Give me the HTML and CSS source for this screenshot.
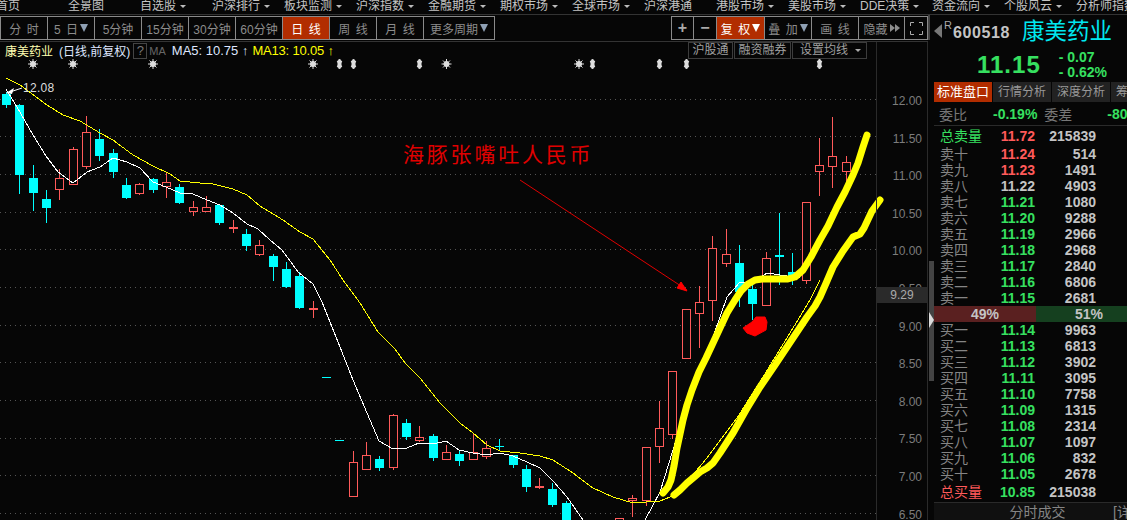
FILE: index.html
```html
<!DOCTYPE html>
<html lang="zh-CN">
<head>
    <meta charset="UTF-8">
    <meta name="viewport" content="width=device-width, initial-scale=1.0">
    <title>康美药业 600518</title>
    <link rel="stylesheet" href="styles.css">
</head>
<body>
    <nav class="menu">
        <span class="menu-item">首页</span>
        <span class="menu-item">全景图</span>
        <span class="menu-item caret">自选股</span>
        <span class="menu-item caret">沪深排行</span>
        <span class="menu-item caret">板块监测</span>
        <span class="menu-item caret">沪深指数</span>
        <span class="menu-item caret">金融期货</span>
        <span class="menu-item caret">期权市场</span>
        <span class="menu-item caret">全球市场</span>
        <span class="menu-item">沪深港通</span>
        <span class="menu-item caret">港股市场</span>
        <span class="menu-item caret">美股市场</span>
        <span class="menu-item caret">DDE决策</span>
        <span class="menu-item caret">资金流向</span>
        <span class="menu-item caret">个股风云</span>
        <span class="menu-item">分析师指数</span>
    </nav>

    <div class="main">
        <section class="left">
            <div class="toolbar">
                <div class="btn-group">
                    <span class="tb-btn">分 时</span>
                    <span class="tb-btn">5 日<i class="tri"></i></span>
                    <span class="tb-btn">5分钟</span>
                    <span class="tb-btn">15分钟</span>
                    <span class="tb-btn">30分钟</span>
                    <span class="tb-btn">60分钟</span>
                    <span class="tb-btn active">日 线</span>
                    <span class="tb-btn">周 线</span>
                    <span class="tb-btn">月 线</span>
                    <span class="tb-btn w-more">更多周期<i class="tri"></i></span>
                </div>
                <div class="btn-group">
                    <span class="tb-btn w-xs sign">+</span>
                    <span class="tb-btn w-s sign">−</span>
                    <span class="tb-btn w-m active">复 权<i class="tri white"></i></span>
                    <span class="tb-btn">叠 加<i class="tri"></i></span>
                    <span class="tb-btn">画 线</span>
                    <span class="tb-btn w-hide">隐藏<i class="arr"></i><i class="arr"></i></span>
                    <span class="tb-btn w-s">
                        <svg class="fs-icon" viewBox="0 0 13 13"><path d="M0.5 4V0.5H4M9 0.5H12.5V4M12.5 9V12.5H9M4 12.5H0.5V9"/></svg>
                    </span>
                </div>
            </div>

            <div class="chart-area">
                <div class="plot">
                    <div class="legend">
                        <span class="stock">康美药业</span>
                        <span class="period">(日线,前复权)</span>
                        <span class="help">?</span>
                        <span class="ma-name">MA</span>
                        <span class="ma5">MA5: 10.75 ↑</span>
                        <span class="ma13">MA13: 10.05 ↑</span>
                        <div class="legend-btns">
                            <span class="lg-btn">沪股通</span>
                            <span class="lg-btn">融资融券</span>
                            <span class="lg-btn wide">设置均线<i class="tri small"></i></span>
                        </div>
                    </div>

                    <svg class="kline" viewBox="0 60 876 460" width="876" height="460">
                        <defs>
                            <g id="star">
                                <circle r="2.6"/>
                                <path d="M0 -5V5M-5 0H5M-3.5 -3.5L3.5 3.5M-3.5 3.5L3.5 -3.5"/>
                            </g>
                            <polygon id="updown" points="0,-5 2.5,-2 1.5,-2 1.5,2 2.5,2 0,5 -2.5,2 -1.5,2 -1.5,-2 -2.5,-2"/>
                        </defs>

                        <g class="marks">
                            <use href="#star" x="33" y="64"/>
                            <use href="#star" x="73" y="64"/>
                            <use href="#star" x="153" y="64"/>
                            <use href="#star" x="313" y="64"/>
                            <use href="#updown" x="339.5" y="64"/>
                            <use href="#updown" x="353.5" y="64"/>
                            <use href="#updown" x="419.5" y="64"/>
                            <use href="#star" x="446.5" y="64"/>
                            <use href="#star" x="579" y="64"/>
                            <use href="#updown" x="592.5" y="64"/>
                            <use href="#updown" x="659.5" y="64"/>
                            <use href="#updown" x="686.5" y="64"/>
                            <use href="#updown" x="819.5" y="64"/>
                        </g>

                        <path class="grid" d="M0 99.5H876M0 136.5H876M0 174.5H876M0 212.5H876M0 249.5H876M0 287.5H876M0 325.5H876M0 362.5H876M0 400.5H876M0 438.5H876M0 475.5H876M0 513.5H876"/>

                        <!-- 阴线 -->
                        <g class="down">
                            <path d="M6.5 92V108"/><rect x="2.5" y="94.5" width="8" height="10"/>
                            <path d="M19.5 104V194"/><rect x="15.5" y="105.5" width="8" height="69"/>
                            <path d="M33.5 165V211"/><rect x="29.5" y="178.5" width="8" height="14"/>
                            <path d="M46.5 190V223"/><rect x="42.5" y="199.5" width="8" height="8"/>
                            <path d="M99.5 129V161"/><rect x="95.5" y="139.5" width="8" height="16"/>
                            <path d="M113.5 149V178"/><rect x="109.5" y="153.5" width="8" height="18"/>
                            <path d="M126.5 178V199"/><rect x="122.5" y="185.5" width="8" height="12"/>
                            <path d="M153.5 178V193"/><rect x="149.5" y="179.5" width="8" height="10"/>
                            <path d="M179.5 184V204"/><rect x="175.5" y="187.5" width="8" height="15"/>
                            <path d="M219.5 205V225"/><rect x="215.5" y="205.5" width="8" height="17"/>
                            <path d="M246.5 229V251"/><rect x="242.5" y="234.5" width="8" height="11"/>
                            <path d="M273.5 254V281"/><rect x="269.5" y="256.5" width="8" height="10"/>
                            <path d="M286.5 262V288"/><rect x="282.5" y="269.5" width="8" height="17"/>
                            <path d="M299.5 272V309"/><rect x="295.5" y="276.5" width="8" height="31"/>
                            <path d="M322 377.5H331M335 440.5H344"/>
                            <path d="M379.5 456V471"/><rect x="375.5" y="459.5" width="8" height="8"/>
                            <path d="M406.5 419V440"/><rect x="402.5" y="423.5" width="8" height="13"/>
                            <path d="M433.5 434V461"/><rect x="429.5" y="436.5" width="8" height="21"/>
                            <path d="M459.5 450V466"/><rect x="455.5" y="454.5" width="8" height="6"/>
                            <path d="M499.5 439V450M495 446.5H504"/>
                            <path d="M513.5 455V468"/><rect x="509.5" y="455.5" width="8" height="9"/>
                            <path d="M526.5 465V492"/><rect x="522.5" y="469.5" width="8" height="17"/>
                            <path d="M552.5 483V507"/><rect x="548.5" y="489.5" width="8" height="15"/>
                            <path d="M566.5 501V525"/><rect x="562.5" y="503.5" width="8" height="22"/>
                            <path d="M739.5 245V307"/><rect x="735.5" y="263.5" width="8" height="28"/>
                            <path d="M752.5 285V320"/><rect x="748.5" y="289.5" width="8" height="14"/>
                            <path d="M779.5 213V285M775 255.5H784M775 256.5H784"/>
                            <path d="M792.5 253V285"/><rect x="788.5" y="272.5" width="8" height="6"/>
                        </g>

                        <!-- 阳线 -->
                        <g class="up">
                            <path d="M59.5 169V200"/><rect x="55.5" y="178.5" width="8" height="11"/>
                            <path d="M73.5 147V185"/><rect x="69.5" y="149.5" width="8" height="35"/>
                            <path d="M86.5 116V169"/><rect x="82.5" y="132.5" width="8" height="34"/>
                            <path d="M139.5 183V195"/><rect x="135.5" y="184.5" width="8" height="9"/>
                            <path d="M166.5 173V198"/><rect x="162.5" y="182.5" width="8" height="4"/>
                            <path d="M193.5 201V216"/><rect x="189.5" y="207.5" width="8" height="4"/>
                            <path d="M206.5 196V212"/><rect x="202.5" y="207.5" width="8" height="4"/>
                            <path d="M233.5 220V233M229 227.5H238M229 228.5H238"/>
                            <path d="M259.5 240V256"/><rect x="255.5" y="245.5" width="8" height="9"/>
                            <path d="M313.5 301V318M309 308.5H318M309 309.5H318"/>
                            <path d="M353.5 451V462"/><rect x="349.5" y="462.5" width="8" height="34"/>
                            <path d="M366.5 442V470"/><rect x="362.5" y="455.5" width="8" height="14"/>
                            <path d="M393.5 414V470"/><rect x="389.5" y="415.5" width="8" height="52"/>
                            <path d="M419.5 426V442"/><rect x="415.5" y="437.5" width="8" height="3"/>
                            <path d="M446.5 445V460"/><rect x="442.5" y="452.5" width="8" height="7"/>
                            <path d="M473.5 433V460"/><rect x="469.5" y="452.5" width="8" height="7"/>
                            <path d="M486.5 441V459"/><rect x="482.5" y="448.5" width="8" height="8"/>
                            <path d="M539.5 478V489M535 486.5H544M535 487.5H544"/>
                            <rect x="615.5" y="518.5" width="8" height="8"/>
                            <path d="M632.5 495V517"/><rect x="628.5" y="498.5" width="8" height="2"/>
                            <path d="M646.5 447V506"/><rect x="642.5" y="447.5" width="8" height="53"/>
                            <path d="M659.5 401V463"/><rect x="655.5" y="428.5" width="8" height="18"/>
                            <path d="M672.5 371V439"/><rect x="668.5" y="371.5" width="8" height="63"/>
                            <rect x="682.5" y="309.5" width="8" height="49"/>
                            <path d="M699.5 286V348"/><rect x="695.5" y="302.5" width="8" height="11"/>
                            <path d="M712.5 236V321"/><rect x="708.5" y="248.5" width="8" height="52"/>
                            <path d="M726.5 229V267"/><rect x="722.5" y="254.5" width="8" height="9"/>
                            <path d="M766.5 252V306"/><rect x="762.5" y="258.5" width="8" height="47"/>
                            <path d="M806.5 202V284"/><rect x="802.5" y="202.5" width="8" height="78"/>
                            <path d="M819.5 138V196"/><rect x="815.5" y="165.5" width="8" height="6"/>
                            <path d="M832.5 117V188"/><rect x="828.5" y="156.5" width="8" height="10"/>
                            <path d="M846.5 156V183"/><rect x="842.5" y="162.5" width="8" height="9"/>
                        </g>

                        <polyline class="ma-line white-line" points="6,89 17,107 33,135 46,156 58,172 73,183 87,172 100,167 113,158 127,162 140,168 153,182 166,187 180,193 193,194 207,200 220,205 233,213 247,224 258,229 270,240 282,250 288,258 298,272 313,284 322,302 328,317 340,347 353,380 367,413 379,441 393,449 407,448 419,443 433,444 446,441 459,450 473,453 487,455 500,453 513,456 527,462 540,468 553,481 567,497 583,520"/>
                        <polyline class="ma-line white-line" points="645,520 660,492 673,450 690,395 713,337 727,297 740,282 753,282 767,273 780,275 800,278"/>
                        <polyline class="ma-line yellow-line" points="6,78 20,85 47,105 63,115 80,121 100,133 113,140 133,155 153,166 170,174 180,181 200,183 213,184 233,189 247,195 260,206 283,220 300,232 313,239 330,260 343,280 360,303 378,332 395,349 405,363 420,378 440,403 460,423 473,433 487,445 500,451 520,453 540,456 553,460 573,473 593,488 613,497 633,503 660,501 675,495 703,463 737,418 763,377 793,328 810,300 820,280"/>

                        <!-- 手绘 -->
                        <polyline class="hand" points="663,493 668,487 671,480 674,466 677,448 680,434 683,420 687,405 692,390 699,372 706,358 713,343 720,328 727,313 735,300 741,291 748,284 755,280 762,279 775,279 788,279 795,277 803,270 811,257 820,240 828,226 837,207 845,192 853,175 858,163 863,147 867,135"/>
                        <polyline class="hand" points="674,495 680,490 687,483 693,478 700,472 707,468 713,463 720,453 733,433 746,410 760,387 775,365 793,338 807,317 815,306 820,297 827,281 833,267 843,251 853,237 860,234 864,228 872,211 880,200"/>
                        <polygon class="blob" points="743,328 752,322 756,317 765,317 767,322 766,330 755,336 747,333"/>
                        <path class="red-arrow" d="M520 180L687 290"/>
                        <polygon class="blob" points="687,291 677,288 681,282"/>

                        <path class="peak-arrow" d="M7 93L22 88"/>
                        <polygon class="peak-head" points="6,93 14,88 12,94"/>
                        <text class="peak-label" x="23" y="92">12.08</text>
                        <text class="note" x="403" y="162">海豚张嘴吐人民币</text>
                    </svg>
                </div>

                <div class="axis">
                    <span>12.00</span>
                    <span>11.50</span>
                    <span>11.00</span>
                    <span>10.50</span>
                    <span>10.00</span>
                    <span>9.50</span>
                    <span>9.00</span>
                    <span>8.50</span>
                    <span>8.00</span>
                    <span>7.50</span>
                    <span>7.00</span>
                    <span>6.50</span>
                    <div class="cursor-price">9.29</div>
                </div>
            </div>
        </section>

        <div class="strip">
            <div class="strip-top"></div>
            <div class="thumb"></div>
            <i class="pointer"></i>
        </div>

        <aside class="panel">
            <div class="code-row">
                <i class="back"></i>
                <sup class="r-mark">R</sup>
                <span class="code">600518</span>
                <span class="name">康美药业</span>
            </div>
            <div class="price-row">
                <span class="price">11.15</span>
                <div class="change">
                    <span>- 0.07</span>
                    <span>- 0.62%</span>
                </div>
            </div>
            <div class="tabs">
                <span class="tab on">标准盘口</span>
                <span class="tab">行情分析</span>
                <span class="tab">深度分析</span>
                <span class="tab">筹码分布</span>
            </div>
            <div class="wei">
                <span class="w-label">委比</span>
                <span class="w-val">-0.19%</span>
                <span class="w-label w-diff">委差</span>
                <span class="w-val w-end">-80</span>
            </div>

            <div class="row total"><span class="green">总卖量</span><b class="red">11.72</b><b>215839</b></div>
            <div class="row"><span>卖十</span><b class="red">11.24</b><b>514</b></div>
            <div class="row"><span>卖九</span><b class="red">11.23</b><b>1491</b></div>
            <div class="row"><span>卖八</span><b class="gray">11.22</b><b>4903</b></div>
            <div class="row"><span>卖七</span><b class="green">11.21</b><b>1080</b></div>
            <div class="row"><span>卖六</span><b class="green">11.20</b><b>9288</b></div>
            <div class="row"><span>卖五</span><b class="green">11.19</b><b>2966</b></div>
            <div class="row"><span>卖四</span><b class="green">11.18</b><b>2968</b></div>
            <div class="row"><span>卖三</span><b class="green">11.17</b><b>2840</b></div>
            <div class="row"><span>卖二</span><b class="green">11.16</b><b>6806</b></div>
            <div class="row"><span>卖一</span><b class="green">11.15</b><b>2681</b></div>

            <div class="ratio">
                <span class="ratio-buy">49%</span>
                <span class="ratio-sell">51%</span>
            </div>

            <div class="row"><span>买一</span><b class="green">11.14</b><b>9963</b></div>
            <div class="row"><span>买二</span><b class="green">11.13</b><b>6813</b></div>
            <div class="row"><span>买三</span><b class="green">11.12</b><b>3902</b></div>
            <div class="row"><span>买四</span><b class="green">11.11</b><b>3095</b></div>
            <div class="row"><span>买五</span><b class="green">11.10</b><b>7758</b></div>
            <div class="row"><span>买六</span><b class="green">11.09</b><b>1315</b></div>
            <div class="row"><span>买七</span><b class="green">11.08</b><b>2314</b></div>
            <div class="row"><span>买八</span><b class="green">11.07</b><b>1097</b></div>
            <div class="row"><span>买九</span><b class="green">11.06</b><b>832</b></div>
            <div class="row"><span>买十</span><b class="green">11.05</b><b>2678</b></div>
            <div class="row total"><span class="red">总买量</span><b class="green">10.85</b><b>215038</b></div>

            <div class="foot">
                <span>分时成交</span>
                <span class="detail">[详</span>
            </div>
        </aside>
    </div>
</body>
</html>
```

FILE: styles.css
```css
html, body {
    margin: 0;
    height: 100%;
    overflow: hidden;
}
body {
    background: #060606;
    color: #bbb;
    font-family: "Liberation Sans", "Noto Sans CJK SC", sans-serif;
    font-size: 12px;
}
i {
    display: inline-block;
}

/* top menu, cut off by the window edge */
.menu {
    display: flex;
    height: 14px;
    margin-left: -4px;
    border-bottom: 1px solid #333;
    overflow: hidden;
}
.menu-item {
    flex: 0 0 72px;
    line-height: 12px;
    white-space: nowrap;
    color: #c4c4c4;
}
.caret::after {
    content: "";
    display: inline-block;
    margin-left: 4px;
    vertical-align: 2px;
    border: 3px solid transparent;
    border-top: 3px solid #bbb;
    border-bottom: 0;
}

.main {
    display: flex;
    height: 505px;
}
.left {
    flex: 0 0 928px;
    display: flex;
    flex-direction: column;
}

/* toolbar */
.toolbar {
    display: flex;
    justify-content: space-between;
    height: 27px;
    padding-top: 1px;
    border-bottom: 1px solid #333;
    box-sizing: border-box;
}
.btn-group {
    display: flex;
    height: 24px;
    border: solid #8a8a8a;
    border-width: 1px 0 1px 1px;
    box-sizing: border-box;
}
.tb-btn {
    display: flex;
    align-items: center;
    justify-content: center;
    width: 47px;
    box-sizing: border-box;
    border-right: 1px solid #8a8a8a;
    color: #8c8c8c;
    white-space: pre;
    word-spacing: 2px;
}
.tb-btn.active {
    background: #b22d00;
    color: #fff;
}
.w-more {
    width: 71px;
}
.w-xs {
    width: 22px;
}
.w-s {
    width: 23px;
}
.w-m {
    width: 48px;
}
.w-hide {
    width: 46px;
}
.sign {
    font-size: 16px;
    font-weight: bold;
    color: #aaa;
}
.tri {
    width: 0;
    height: 0;
    margin-left: 2px;
    border: 4.5px solid transparent;
    border-top: 8px solid #8fa0b4;
    border-bottom: 0;
}
.tri.white {
    border-top-color: #fff;
}
.tri.small {
    margin-left: 7px;
    vertical-align: 2px;
    border-width: 3px 3px 0;
    border-top: 3px solid #aaa;
}
.arr {
    width: 0;
    height: 0;
    border: 4px solid transparent;
    border-left: 5px solid #8c8c8c;
    border-right: 0;
}
.arr:first-of-type {
    margin-left: 2px;
}
.fs-icon {
    width: 13px;
    height: 13px;
    fill: none;
    stroke: #aaa;
}

/* chart */
.chart-area {
    flex: 1;
    display: flex;
    min-height: 0;
}
.plot {
    flex: 0 0 875px;
    position: relative;
}
.legend {
    display: flex;
    align-items: center;
    height: 18px;
    padding: 0 0 1px 5px;
    box-sizing: border-box;
    white-space: nowrap;
}
.stock {
    color: #ffffb0;
}
.period {
    margin-left: 6px;
    color: #dfe6ff;
}
.help {
    width: 12px;
    height: 14px;
    margin-left: 3px;
    border: 1px solid #444;
    line-height: 14px;
    text-align: center;
    color: #777;
    font-size: 13px;
}
.ma-name {
    margin-left: 2px;
    color: #666;
    font-size: 11px;
}
.ma5 {
    margin-left: 6px;
    color: #dfe6ff;
    font-size: 13px;
}
.ma13 {
    margin-left: 4px;
    color: #ffff00;
    font-size: 13px;
    letter-spacing: -0.2px;
}
.legend-btns {
    display: flex;
    gap: 1px;
    margin-left: auto;
    margin-right: 9px;
}
.lg-btn {
    padding: 0 3.5px;
    height: 15px;
    line-height: 15px;
    border: 1px solid #3c3c3c;
    color: #a0a0a0;
}
.lg-btn.wide {
    padding: 0 5px 0 7px;
}
.kline {
    display: block;
    overflow: visible;
}
.grid {
    fill: none;
    stroke: #555;
    stroke-dasharray: 1 4;
}
.marks {
    fill: #ddd;
    stroke: #ddd;
    stroke-width: 1;
}
.down path, .up path {
    fill: none;
    stroke-width: 1;
    shape-rendering: crispEdges;
}
.down rect, .up rect {
    shape-rendering: crispEdges;
}
.down path, .down rect {
    stroke: #00ffff;
}
.down rect {
    fill: #00ffff;
}
.up path, .up rect {
    stroke: #ff5a5a;
}
.up rect {
    fill: #060606;
}
.ma-line {
    fill: none;
    stroke-width: 1;
    shape-rendering: crispEdges;
}
.white-line {
    stroke: #fff;
}
.yellow-line {
    stroke: #ffff00;
}
.hand {
    fill: none;
    stroke: #ffff00;
    stroke-width: 7;
    stroke-linecap: round;
    stroke-linejoin: round;
}
.blob {
    fill: #f00;
    stroke: #f00;
}
.red-arrow {
    stroke: #e00000;
    fill: none;
}
.peak-arrow {
    stroke: #fff;
}
.peak-head {
    fill: #fff;
}
.peak-label {
    fill: #ddd;
    font-size: 12px;
    letter-spacing: 0.3px;
}
.note {
    fill: #e00000;
    font-size: 21px;
    letter-spacing: 2.8px;
}

/* price axis */
.axis {
    flex: 0 0 52px;
    position: relative;
    display: flex;
    flex-direction: column;
    padding-top: 41px;
    border: solid #2a2a2a;
    border-width: 0 1px;
    box-sizing: border-box;
    overflow: hidden;
}
.axis span {
    flex: 0 0 37.6px;
    padding-right: 5px;
    line-height: 37.6px;
    text-align: right;
    color: #7c7c7c;
}
.cursor-price {
    position: absolute;
    top: 245px;
    left: 0;
    right: 0;
    height: 16px;
    line-height: 16px;
    text-align: center;
    background: #2a2a2a;
    color: #aaa;
}

/* strip between chart and panel */
.strip {
    flex: 0 0 6px;
    position: relative;
}
.strip-top {
    width: 2px;
    height: 25px;
    background: #444;
}
.thumb {
    height: 120px;
    margin-top: 221px;
    margin-left: 1px;
    background: #444;
}
.pointer {
    position: absolute;
    top: 297px;
    left: 1px;
    width: 0;
    height: 0;
    border: 8px solid transparent;
    border-left: 5px solid #ddd;
    border-right: 0;
}

/* quote panel */
.panel {
    flex: 1;
    min-width: 0;
    overflow: hidden;
    white-space: nowrap;
}
.code-row {
    display: flex;
    align-items: center;
    height: 32px;
}
.back {
    width: 0;
    height: 0;
    border: 7px solid transparent;
    border-right: 8px solid #777;
    border-left: 0;
}
.r-mark {
    align-self: flex-start;
    margin: 4px 0 0 2px;
    font-size: 11px;
    color: #aaa;
}
.code {
    margin: 3px 0 0 1px;
    font-size: 16px;
    font-weight: bold;
    color: #c4c4c4;
    letter-spacing: 0.6px;
}
.name {
    margin: 3px 0 0 12px;
    font-size: 22.5px;
    color: #00e8f0;
    line-height: 1;
}
.price-row {
    display: flex;
    align-items: center;
    height: 35px;
    padding-left: 43px;
    color: #36e060;
}
.price {
    font-size: 24px;
    font-weight: bold;
    letter-spacing: 1px;
}
.change {
    display: flex;
    flex-direction: column;
    margin-left: 18px;
    font-size: 14px;
    font-weight: bold;
    line-height: 15px;
}
.tabs {
    display: flex;
    gap: 1px;
    height: 20px;
}
.tab {
    flex: 0 0 58px;
    line-height: 20px;
    text-align: center;
    background: #222;
    color: #999;
}
.tab.on {
    background: #b22d00;
    color: #fff;
    font-size: 13px;
}
.wei {
    display: flex;
    align-items: center;
    height: 23px;
    padding-left: 5px;
    border-bottom: 1px solid #2a2a2a;
    font-size: 14px;
}
.w-label {
    color: #777;
}
.w-val {
    margin-left: 26px;
    font-weight: bold;
    color: #36e060;
}
.w-diff {
    margin-left: 7px;
}
.w-end {
    margin-left: 35px;
}
.row {
    display: grid;
    grid-template-columns: 53px 42px 61px;
    height: 16px;
    padding-left: 6px;
    line-height: 16px;
    font-size: 14px;
}
.row span {
    color: #858585;
}
.row b {
    text-align: right;
    color: #c4c4c4;
}
.total {
    margin: 2px 0;
}
.row .green {
    color: #36e060;
}
.row .red {
    color: #ff5a5a;
}
.row .gray {
    color: #c4c4c4;
}
.ratio {
    display: flex;
    height: 16px;
    line-height: 16px;
    font-size: 14px;
    font-weight: bold;
    color: #c4c4c4;
}
.ratio-buy {
    flex: 0 0 102px;
    text-align: center;
    background: #5a2020;
}
.ratio-sell {
    flex: 1;
    padding-left: 39px;
    background: #15401f;
}
.foot {
    position: relative;
    height: 18px;
    margin-top: 2px;
    padding-left: 14px;
    border-top: 1px solid #2a2a2a;
    background: #101010;
    line-height: 18px;
    font-size: 14px;
    text-align: center;
    color: #858585;
}
.detail {
    position: absolute;
    left: 179px;
}
```
